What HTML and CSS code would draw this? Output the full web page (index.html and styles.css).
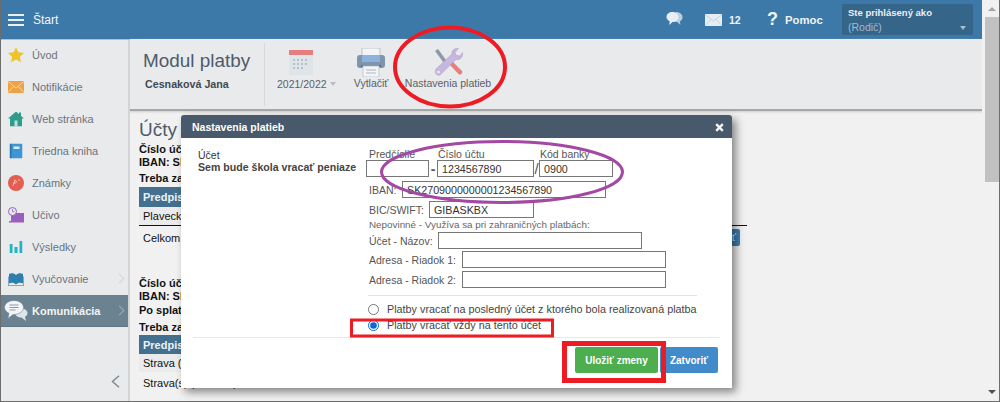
FILE: index.html
```html
<!DOCTYPE html>
<html lang="sk">
<head>
<meta charset="utf-8">
<title>Modul platby</title>
<link rel="stylesheet" href="styles.css">
</head>
<body>
<div class="page">
  <div class="main">
    <header class="topbar">
      <div class="burger"><i></i><i></i><i></i></div>
      <span class="start">Štart</span>
      <div class="topright">
        <svg class="ic-chat" width="17" height="16" viewBox="0 0 17 16"><path d="M10 1c3.500 0 6.500 2.200 6.500 5.200 0 2-1.300 3.500-2.600 4.300l.6 3.500-3.300-3c-2 0-3-1-3-1z" fill="#b9cfe0"/><path d="M6.500 1C10 1 12.500 3 12.500 6S10 11 6.500 11l-3.300 3 .5-3.700C2 9.500.5 8 .5 6 .5 3 3 1 6.500 1z" fill="#e8eef4"/></svg>
        <svg class="ic-mail" width="17" height="12" viewBox="0 0 17 12"><rect width="17" height="12" fill="#e6edf3"/><path d="M0 .5l8.500 6.500L17 .5M0 11.500l6-6M17 11.500l-6-6" fill="none" stroke="#b7cbdc" stroke-width=".8"/></svg>
        <b class="count">12</b>
        <b class="qmark">?</b>
        <b class="help">Pomoc</b>
        <div class="userbox">
          <b>Ste prihlásený ako</b>
          <span class="role">(Rodič)</span>
          <i class="usercaret"></i>
        </div>
      </div>
    </header>
    <div class="below">
      <nav class="sidebar">
        <a class="item"><svg width="16" height="16" viewBox="0 0 16 16"><path d="M8 0l2.400 5.200 5.600.7-4.100 3.800 1.100 5.600L8 12.500l-5 2.800 1.100-5.600L0 5.900l5.600-.7z" fill="#efc42a"/></svg><span>Úvod</span></a>
        <a class="item"><svg width="16" height="12" viewBox="0 0 16 12"><rect width="16" height="12" fill="#eda344"/><path d="M0 .5L8 7l8-6.500M0 11.500L5.500 5.500M16 11.500l-5.500-6" fill="none" stroke="#f7dcb4" stroke-width=".9"/></svg><span>Notifikácie</span></a>
        <a class="item"><svg width="16" height="15" viewBox="0 0 16 15"><path d="M8 0l8 7h-2v8H2V7H0z" fill="#2f9c8a"/><rect x="11" y="1" width="2" height="4" fill="#2f9c8a"/><rect x="6.500" y="9" width="3" height="6" fill="#bfe0da"/></svg><span>Web stránka</span></a>
        <a class="item"><svg width="13" height="15" viewBox="0 0 13 15"><rect x="1" width="12" height="15" rx="1" fill="#3d95d6"/><rect width="2" height="15" fill="#2a75b0"/><rect x="4" y="3" width="6" height="2.500" fill="#d9ecf8"/></svg><span>Triedna kniha</span></a>
        <a class="item"><svg width="16" height="16" viewBox="0 0 16 16"><circle cx="8" cy="8" r="8" fill="#e35d50"/><path d="M5 11l2-6M5 8h2.500c1.500 0 1-3-1-3M10 5h2" fill="none" stroke="#f6c8c2" stroke-width=".9"/></svg><span>Známky</span></a>
        <a class="item"><svg width="16" height="16" viewBox="0 0 16 16"><rect x="3" y="6" width="13" height="8" fill="#9a5fbe"/><rect x="1" y="14" width="15" height="1.500" fill="#9a5fbe"/><circle cx="4.500" cy="4.500" r="4" fill="#e9eaec" stroke="#9a5fbe"/><path d="M4.500 2v2.700h2" fill="none" stroke="#9a5fbe" stroke-width=".8"/></svg><span>Učivo</span></a>
        <a class="item"><svg width="13" height="12" viewBox="0 0 13 12"><rect y="3" width="3" height="9" fill="#1fb5c9"/><rect x="5" y="6" width="3" height="6" fill="#1fb5c9"/><rect x="10" width="3" height="12" fill="#1fb5c9"/></svg><span>Výsledky</span></a>
        <a class="item"><svg width="16" height="13" viewBox="0 0 16 13"><path d="M8 2.500C6 .5 3 .5 1 1.500V11c2-1 5-1 7 1 2-2 5-2 7 -1V1.500C13 .5 10 .5 8 2.500z" fill="#2e80ac"/><path d="M0 4v9h16V4" fill="none" stroke="#1f6a93"/></svg><span>Vyučovanie</span><i class="chev"></i></a>
        <a class="item active"><svg class="bubbles" width="24" height="21" viewBox="0 0 24 21"><path d="M17 8c3.500 0 6.500 2 6.500 4.500 0 1.600-1 3-2.500 3.700l1 4.300-4.500-3.500c-3.500 0-6.500-2-6.500-4.500S13.500 8 17 8z" fill="#dde5ea"/><path d="M10 0c5 0 9.500 3 9.500 7s-4.500 7-9.500 7H9l-5 4 1-5.200C2.500 11.500.5 9.500.5 7 .5 3 5 0 10 0z" fill="#f2f5f7" stroke="#6f8793" stroke-width=".6"/><path d="M5.500 4.500h9M5.500 7h9M5.500 9.500h6" stroke="#8a9ca6" stroke-width="1"/></svg><span>Komunikácia</span><i class="chev"></i></a>
        <div class="collapse"><svg width="9" height="13" viewBox="0 0 9 13"><path d="M8 .7L1.500 6.500 8 12.300" fill="none" stroke="#7d8a94" stroke-width="1.500"/></svg></div>
      </nav>
      <div class="workspace">
        <section class="module">
          <div class="modtitle">
            <h1>Modul platby</h1>
            <b>Cesnaková Jana</b>
          </div>
          <div class="tools">
            <div class="tool tool-year">
              <svg width="24" height="25" viewBox="0 0 24 25"><rect width="24" height="25" fill="#dfe4e9"/><rect width="24" height="5" fill="#e57f7f"/><g fill="#b5c0ca"><rect x="4" y="9" width="2" height="2"/><rect x="8" y="9" width="2" height="2"/><rect x="12" y="9" width="2" height="2"/><rect x="16" y="9" width="2" height="2"/><rect x="4" y="13" width="2" height="2"/><rect x="8" y="13" width="2" height="2"/><rect x="12" y="13" width="2" height="2"/><rect x="16" y="13" width="2" height="2"/><rect x="4" y="17" width="2" height="2"/><rect x="8" y="17" width="2" height="2"/><rect x="12" y="17" width="2" height="2"/></g></svg>
              <span class="label">2021/2022<i class="graycaret"></i></span>
            </div>
            <div class="tool tool-print">
              <svg width="28" height="29" viewBox="0 0 28 29"><rect x="5" y="0" width="18" height="9" fill="#f3f4f6" stroke="#b9c4cc"/><rect x="0" y="7" width="28" height="13" rx="3" fill="#7e95ac"/><rect x="5" y="7" width="18" height="7" fill="#8eb2df"/><rect x="4" y="17" width="20" height="2" fill="#4f6479"/><rect x="6" y="18" width="16" height="11" fill="#f3f4f6" stroke="#c2ccd3"/><path d="M9 22h10M9 25h10" stroke="#a9b6c1"/></svg>
              <span class="label">Vytlačiť</span>
            </div>
            <div class="tool tool-set">
              <svg width="30" height="28" viewBox="0 0 30 28"><path d="M2 3l3-2 8 11-2.500 2.500z" fill="#8d9aa5"/><path d="M15 15l3-3 11 11c1 1.500-.5 4-3 3.500z" fill="#e57f7f"/><path d="M3 21L19 6c-.8-3 2-6 6.500-5.500L22 4.500l1.500 3 3.500.5 2.500-3.500c1 4-2 8-6.500 7L7 27c-3.500 1.500-6-3-4-6z" fill="#c7b7df" stroke="#a99bc5" stroke-width=".5"/><circle cx="5.500" cy="24" r="1.300" fill="#eef0f2"/></svg>
              <span class="label">Nastavenia platieb</span>
            </div>
          </div>
        </section>
        <section class="content">
          <h2>Účty</h2>
          <div class="acct acct-one">
            <b>Číslo účtu:</b>
            <b>IBAN: SK</b>
            <b class="due">Treba zaplatiť</b>
            <div class="thead">Predpis</div>
            <div class="trow">Plavecký výcvik</div>
            <div class="total"><span>Celkom</span><em class="paybtn">Zaplatiť</em></div>
          </div>
          <div class="acct acct-two">
            <b>Číslo účtu:</b>
            <b>IBAN: SK</b>
            <span class="after">Po splatnosti</span>
            <b class="due2">Treba zaplatiť</b>
            <div class="thead">Predpis</div>
            <div class="trow">Strava (10/2021)</div>
            <div class="trow plain">Strava(s) (11/2021)</div>
          </div>
        </section>
      </div>
    </div>
  </div>
  <aside class="scrollbar">
    <i class="sc-up"></i>
    <div class="sc-thumb"></div>
    <i class="sc-down"></i>
  </aside>
</div>

<div class="modal">
  <div class="modal-head"><b>Nastavenia platieb</b><svg class="close" width="9" height="9" viewBox="0 0 9 9"><path d="M1.200 1.200l6.600 6.600M7.800 1.200L1.200 7.800" stroke="#f6f6f6" stroke-width="2.400"/></svg></div>
  <div class="modal-body">
    <div class="intro"><div>Účet</div><b>Sem bude škola vracať peniaze</b></div>
    <div class="form">
      <div class="labels"><span class="l1">Predčíslie</span><span class="l2">Číslo účtu</span><span>Kód banky</span></div>
      <div class="row acctrow"><input class="f-pre"><b class="dash">-</b><input class="f-num" value="1234567890"><span class="slash">/</span><input class="f-bank" value="0900"></div>
      <div class="row r-iban"><label>IBAN:</label><input class="f-iban" value="SK2709000000001234567890"></div>
      <div class="row r-bic"><label>BIC/SWIFT:</label><input class="f-bic" value="GIBASKBX"></div>
      <div class="hint">Nepovinné - Využíva sa pri zahraničných platbách:</div>
      <div class="row r-name"><label>Účet - Názov:</label><input class="f-wide"></div>
      <div class="row r-a1"><label>Adresa - Riadok 1:</label><input class="f-wide"></div>
      <div class="row r-a2"><label>Adresa - Riadok 2:</label><input class="f-wide"></div>
    </div>
  </div>
  <div class="choices">
    <label class="choice"><input type="radio" name="ret"><span>Platby vracať na posledný účet z ktorého bola realizovaná platba</span></label>
    <label class="choice"><input type="radio" name="ret" checked><span>Platby vracať vždy na tento účet</span></label>
  </div>
  <div class="modal-foot">
    <button class="btn green">Uložiť zmeny</button>
    <button class="btn blue">Zatvoriť</button>
  </div>
</div>

<svg class="marks" width="1000" height="402" viewBox="0 0 1000 402">
  <ellipse cx="450" cy="67" rx="55" ry="39.500" fill="none" stroke="#ed1c24" stroke-width="4"/>
  <ellipse cx="502" cy="172" rx="120.500" ry="30.500" fill="none" stroke="#a349a4" stroke-width="3"/>
  <rect x="351.500" y="320" width="201" height="16" fill="none" stroke="#ed1c24" stroke-width="3"/>
  <rect x="564.500" y="343.500" width="99" height="37" fill="none" stroke="#ed1c24" stroke-width="5"/>
</svg>
</body>
</html>
```
FILE: styles.css
```css
* { box-sizing: border-box; }
html, body { margin: 0; height: 402px; overflow: hidden; background: #fff; }
body { font-family: "Liberation Sans", Arial, sans-serif; font-size: 11px; color: #222; }
i, em { font-style: normal; display: block; }

.page { width: 1000px; height: 402px; display: flex; border: solid #6d6d6d; border-width: 0 1px 1px 1px; background: #f1f1f1; overflow: hidden; }
.main { width: 981px; flex: none; display: flex; flex-direction: column; }

.topbar { height: 39px; flex: none; background: #3d79a8; display: flex; align-items: center; color: #fff; box-shadow: 0 1px 0 #b9bec3; position: relative; }
.burger { width: 16px; margin-left: 7px; display: flex; flex-direction: column; gap: 3px; }
.burger i { height: 2px; background: #e8f0f6; }
.start { margin-left: 9px; font-size: 12px; color: #f0f5f9; }
.topright { margin-left: auto; display: flex; align-items: center; }
.ic-chat { margin-right: 22px; margin-top: -2px; }
.ic-mail { margin-right: 7px; }
.count { font-size: 10.500px; width: 12px; margin-right: 26px; color: #eef3f7; }
.qmark { font-size: 18px; width: 18px; color: #eef3f7; }
.help { font-size: 11.300px; width: 57px; color: #eef3f7; }
.userbox { width: 131px; height: 31px; margin-right: 9px; background: #356589; border-radius: 2px; position: relative; padding: 3px 6px; display: flex; flex-direction: column; gap: 2px; }
.userbox b { font-size: 9.500px; line-height: 12px; color: #e9eff4; }
.role { font-size: 10.500px; line-height: 13px; color: #9fbad2; }
.usercaret { position: absolute; right: 7px; top: 22px; border: 3.500px solid transparent; border-top: 4px solid #a6bfd4; border-bottom: 0; }

.below { flex: 1; display: flex; min-height: 0; }
.sidebar { width: 129px; flex: none; background: #e9eaec; border-right: 2px solid #d3d5d8; display: flex; flex-direction: column; }
.item { height: 32px; flex: none; display: flex; align-items: center; position: relative; color: #6a7480; font-size: 11px; padding-left: 0; }
.item svg { position: absolute; left: 15px; top: 50%; transform: translate(-50%, -50%); }
.item span { margin-left: 31px; }
.item .chev { position: absolute; left: 115px; top: 12px; width: 7px; height: 7px; border: solid #d2d4d7; border-width: 1px 1px 0 0; transform: rotate(45deg); }
.active { background: #6b8391; color: #f3f5f6; font-weight: bold; border-bottom: 1px solid #5d7684; }
.active svg { left: 15px; }
.active .chev { border-color: #9cadb7; }
.collapse { margin-top: auto; height: 36px; padding: 10px 0 0 110px; }

.workspace { flex: 1; display: flex; flex-direction: column; min-width: 0; }
.module { height: 72px; flex: none; background: #e9eaec; display: flex; border-bottom: 2px solid #a5a7a9; box-shadow: 0 1px 2px #ccc; position: relative; padding-top: 4px; }
.modtitle { width: 135px; height: 63px; border-right: 1px solid #d6d8da; padding: 5px 0 0 13px; display: flex; flex-direction: column; }
.modtitle h1 { margin: 0; font-size: 18.900px; line-height: 26px; font-weight: normal; color: #4d5c6b; }
.modtitle b { margin: 4px 0 0 2px; font-size: 10.700px; line-height: 13px; color: #3f4953; }
.tools { position: relative; display: flex; }
.tool { display: flex; flex-direction: column; align-items: center; color: #5a6068; font-size: 10.500px; }
.tool .label { display: flex; align-items: center; white-space: nowrap; line-height: 12px; }
.tool-year { margin-left: 12px; width: 61px; padding-top: 7px; align-items: flex-start; }
.tool-year svg { margin-left: 12px; margin-bottom: 3px; }
.graycaret { margin-left: 3px; border: 3.500px solid transparent; border-top: 4px solid #b9bcc0; border-bottom: 0; }
.tool-print { margin-left: 16px; width: 34px; padding-top: 5px; }
.tool-set { margin-left: 16px; width: 88px; padding-top: 5px; }
.tool-set svg { margin-bottom: 1px; }

.content { flex: 1; padding: 8px 0 0 9px; position: relative; overflow: hidden; min-height: 0; }
.content h2 { margin: 0; font-size: 19px; line-height: 22px; font-weight: normal; color: #4d5c6b; }
.acct { width: 608px; font-size: 11px; display: flex; flex-direction: column; color: #111; }
.acct > b, .after { line-height: 13px; }
.acct-one { margin-top: 2px; }
.acct-two { margin-top: 30px; }
.due { margin-top: 3px; }
.after { font-weight: bold; margin-top: 1px; }
.due2 { margin-top: 4px; }
.thead { width: 580px; height: 19.500px; margin-top: 2px; background: #44708f; color: #eef2f5; font-weight: bold; line-height: 20px; padding-left: 4px; }
.acct-two .thead { margin-top: 1px; }
.trow { width: 580px; height: 18px; background: #ebebeb; line-height: 18px; padding-left: 4px; }
.plain { height: 22px; background: #f1f1f1; line-height: 22px; }
.total { display: flex; justify-content: flex-end; position: relative; align-items: center; padding: 3px 7px 0 4px; height: 22px; border-top: 1px solid #111; }
.total span { margin-right: auto; }
.paybtn { background: #3d7fb4; color: #dfe9f1; height: 17px; line-height: 17px; border-radius: 2px; padding: 0 4px; }

.scrollbar { width: 17px; flex: none; position: relative; background: #f1f1f1; display: flex; flex-direction: column; align-items: center; padding-left: 2px; }
.sc-up { margin-top: 7px; border: 4px solid transparent; border-bottom: 4px solid #a3a3a3; border-top: 0; }
.sc-thumb { width: 14px; height: 165px; margin-top: 6px; background: #c1c1c1; }
.sc-down { margin-top: auto; margin-bottom: 7px; border: 4px solid transparent; border-top: 4px solid #505050; border-bottom: 0; }

.modal { position: absolute; left: 181px; top: 115px; width: 551px; height: 273px; background: #fff; border-radius: 3px 3px 0 0; box-shadow: 4px 4px 8px rgba(0,0,0,.45); font-size: 10.500px; color: #444; }
.modal-head { height: 23px; background: #47596a; border-radius: 3px 3px 0 0; color: #fff; display: flex; align-items: center; justify-content: space-between; padding: 0 8px 0 11px; font-size: 10.500px; }
.close { display: block; margin-top: 1px; }
.modal-body { display: flex; height: 157px; }
.intro { width: 185px; padding: 11px 0 0 17px; line-height: 12px; color: #333; }
.intro b { font-weight: bold; color: #444; white-space: nowrap; font-size: 10.600px; }
.form { flex: 1; position: relative; }
.labels { display: flex; padding: 10px 0 0 3px; line-height: 12px; height: 22px; color: #555; }
.labels .l1 { width: 69px; }
.labels .l2 { width: 102px; }
.row { display: flex; align-items: center; color: #555; }
.row input, .row label { flex: none; }
input:not([type=radio]) { height: 17px; border: 1px solid #777; background: #fff; padding: 0 4px; margin: 0; font: 10.700px "Liberation Sans", Arial, sans-serif; color: #333; border-radius: 0; outline: 0; }
.acctrow { margin-top: 0; height: 17px; }
.f-pre { width: 63px; }
.dash { width: 8px; text-align: center; font-size: 14px; line-height: 17px; padding-top: 2px; }
.f-num { width: 97px; }
.slash { width: 5px; text-align: center; font-size: 15px; line-height: 17px; }
.f-bank { width: 74px; }
.r-iban { margin-top: 4px; padding-left: 3px; }
.r-iban label { width: 33px; }
.f-iban { width: 204px; }
.r-bic { margin-top: 3px; padding-left: 3px; }
.r-bic label { width: 60px; }
.f-bic { width: 105px; }
.hint { margin: 1px 0 0 3px; font-size: 9.850px; line-height: 12px; color: #666; }
.r-name { margin-top: 1px; padding-left: 3px; }
.r-name label { width: 69px; }
.r-a1 { margin-top: 2px; padding-left: 3px; }
.r-a2 { margin-top: 3px; padding-left: 3px; }
.r-a1 label, .r-a2 label { width: 93px; }
.f-wide { width: 204px; }
.choices { margin: 0 35px 0 187px; border-top: 1px solid #e4e4e4; padding-top: 7px; display: flex; flex-direction: column; gap: 4px; height: 42px; font-size: 10.800px; }
.choice { display: flex; align-items: center; height: 12px; color: #444; white-space: nowrap; }
.choice input { width: 11px; height: 11px; margin: 0 8px 0 0; accent-color: #0a68d8; }
.modal-foot { margin: 0 12px; border-top: 1px solid #e8e8e8; display: flex; justify-content: flex-end; gap: 2px; padding: 9px 2px 0 0; }
.btn { height: 26px; border: 1px solid transparent; border-radius: 2px; color: #fff; font: bold 10px "Liberation Sans", Arial, sans-serif; padding: 0; }
.green { width: 83px; background: #4cae4f; }
.blue { width: 58px; background: #428bca; }

.marks { position: absolute; left: 0; top: 0; pointer-events: none; }
```
